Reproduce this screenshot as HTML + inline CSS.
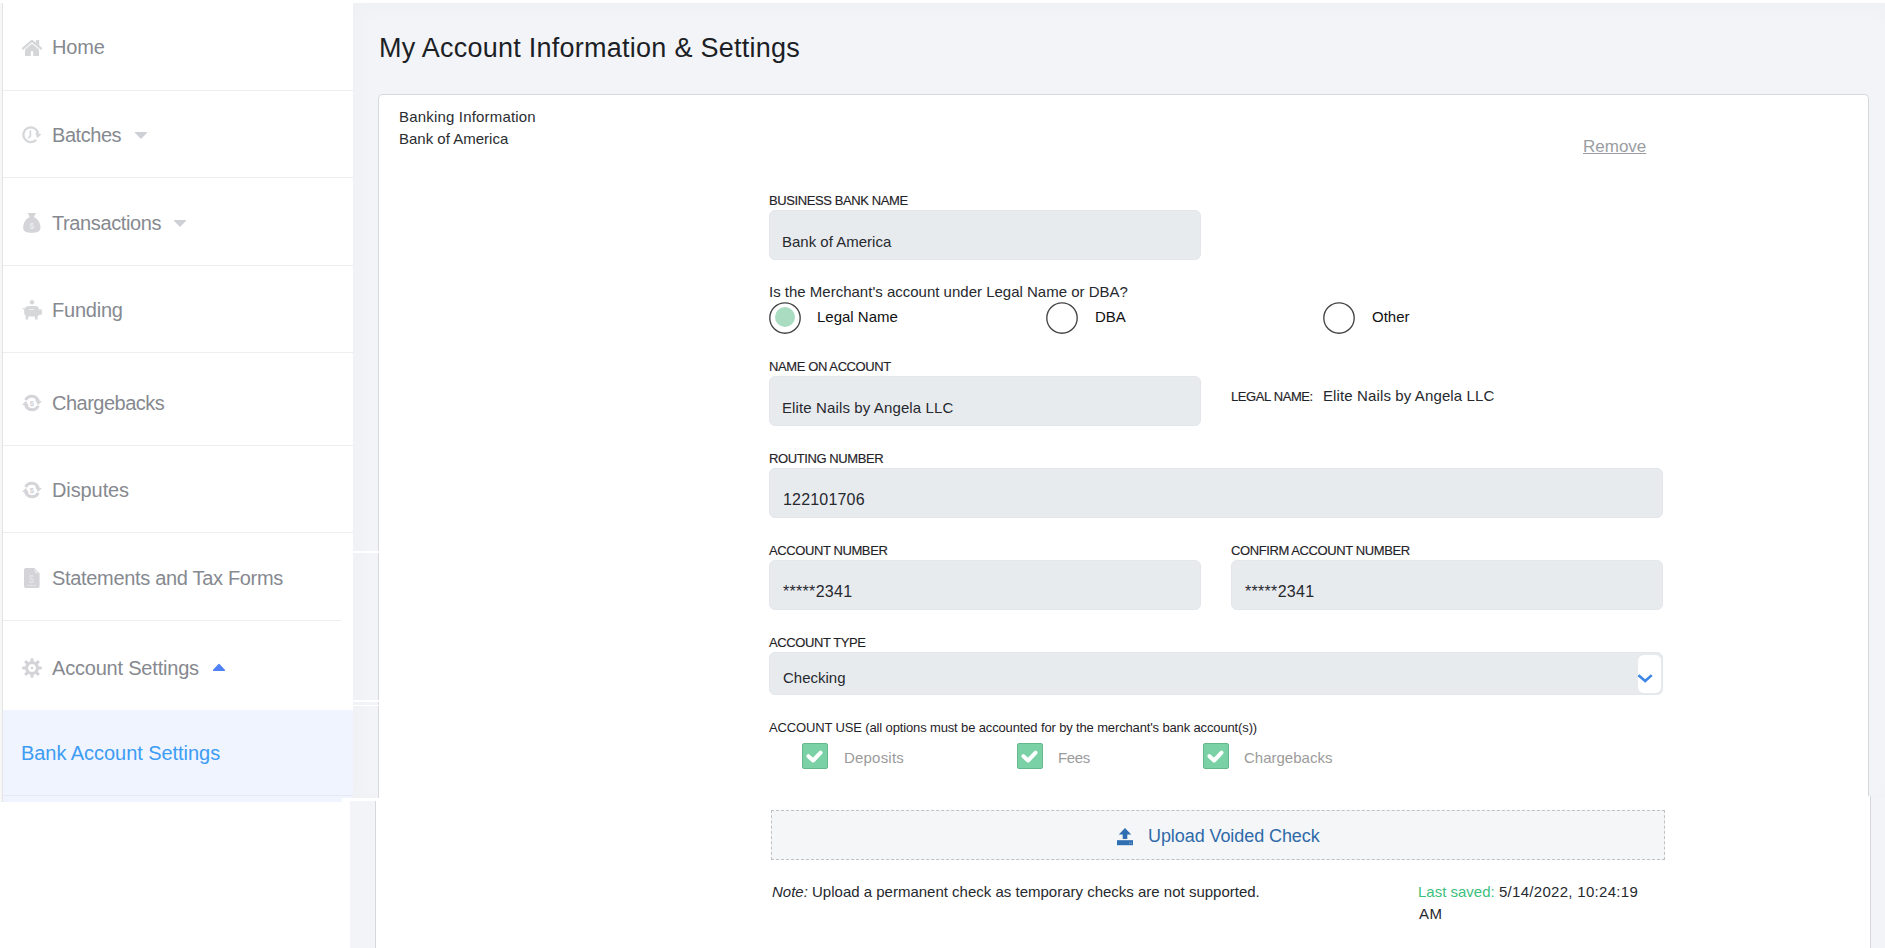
<!DOCTYPE html>
<html><head><meta charset="utf-8">
<style>
*{box-sizing:border-box;margin:0;padding:0}
html,body{width:1885px;height:948px;overflow:hidden;background:#fff;font-family:"Liberation Sans",sans-serif;position:relative}
.abs{position:absolute}
/* sidebar */
#lstrip{left:0;top:3px;width:2px;height:799px;background:#f7f7f7}
#lline{left:2px;top:3px;width:1px;height:799px;background:#e4e4e4}
.sep{position:absolute;left:3px;width:350px;height:1px;background:#edeef0}
.nav{position:absolute;left:52px;font-size:20px;color:#86898f;white-space:nowrap;line-height:1}
.ico{position:absolute;left:22px}
.caret{position:absolute;width:0;height:0;border-left:6px solid transparent;border-right:6px solid transparent;border-top:6px solid #c9cacd}
/* main */
#main{left:353px;top:3px;width:1532px;height:795px;background:#f3f4f8;box-shadow:inset 5px 5px 18px rgba(60,70,90,0.025)}
#main2{left:350px;top:801px;width:1535px;height:147px;background:#f3f4f8}
#card{left:378px;top:94px;width:1491px;height:704px;background:#fff;border:1px solid #d6d8db;border-bottom:none;border-radius:5px 5px 0 0}
#card2{left:375px;top:801px;width:1496px;height:160px;background:#fff;border-right:1px solid #d6d8db}
#card2r{left:1870px;top:796px;width:1px;height:5px;background:#d6d8db}
#gapr{left:1871px;top:798px;width:14px;height:3px;background:#f3f4f8}
#gapw{left:1868px;top:796px;width:2px;height:2px;background:#fff}
#card2l{left:375px;top:801px;width:1px;height:160px;background:#d6d8db}
#gap{left:350px;top:798px;width:29px;height:3px;background:#fff}
.t{position:absolute;white-space:nowrap;line-height:1}
.lbl{position:absolute;margin-top:1px;-webkit-text-stroke:0.15px #1f2328;white-space:nowrap;line-height:1;font-size:13px;letter-spacing:-0.4px;color:#1f2328;text-transform:uppercase}
.inp{position:absolute;height:50px;background:#e8ebee;border-radius:6px;border:1px solid #e3e6ea}
.val{position:absolute;white-space:nowrap;line-height:1;font-size:15px;color:#26292e}
.radio{position:absolute;width:32px;height:32px}
.chk{position:absolute;width:26px;height:26px;background:#7ad1a5;border-radius:2px;border:1px solid #67b98d}
</style></head><body>
<div id="lstrip" class="abs"></div>
<div id="lline" class="abs"></div>

<div class="nav" style="top:37px;letter-spacing:-0.2px">Home</div>
<div class="sep" style="top:90px"></div>
<div class="nav" style="top:125px;letter-spacing:-0.45px">Batches</div>
<div class="sep" style="top:177px"></div>
<div class="nav" style="top:213px;letter-spacing:-0.38px">Transactions</div>
<div class="sep" style="top:265px"></div>
<div class="nav" style="top:300px;letter-spacing:-0.23px">Funding</div>
<div class="sep" style="top:352px"></div>
<div class="nav" style="top:393px;letter-spacing:-0.5px">Chargebacks</div>
<div class="sep" style="top:445px"></div>
<div class="nav" style="top:480px;letter-spacing:-0.1px">Disputes</div>
<div class="sep" style="top:532px"></div>
<div class="nav" style="top:568px;letter-spacing:-0.32px">Statements and Tax Forms</div>
<div class="sep" style="top:620px;width:338px"></div>
<div class="nav" style="top:658px;letter-spacing:-0.2px">Account Settings</div>
<div class="abs" style="left:3px;top:710px;width:350px;height:88px;background:#eff4fe"></div><div class="abs" style="left:3px;top:798px;width:339px;height:4px;background:#eff4fe"></div><div class="abs" style="left:3px;top:795px;width:350px;height:1px;background:#e6eaf0"></div>
<div class="nav" style="top:743px;left:21px;letter-spacing:-0.05px;color:#3d9cf4">Bank Account Settings</div>


<svg class="abs" style="left:22px;top:39px" width="20" height="18" viewBox="0 0 20 18"><g fill="#d5d6d8"><polyline points="0.8,9.6 10,1.8 19.2,9.6" fill="none" stroke="#d5d6d8" stroke-width="2.3" stroke-linecap="round" stroke-linejoin="round"/><rect x="14" y="1" width="3.2" height="5.5"/><path d="M3 10.6 L10 4.8 L17 10.6 L17 17 L11.2 17 L11.2 12.2 L8.8 12.2 L8.8 17 L3 17 Z"/></g></svg>
<svg class="abs" style="left:22px;top:126px" width="20" height="18" viewBox="0 0 20 18"><g fill="none" stroke="#d6d7d9" stroke-width="2.3" stroke-linecap="round"><path d="M13.6 14.4 A7.4 7.4 0 1 1 15.9 6.6"/><polyline points="8.4,5.2 8.3,10.2 6.6,11.6" stroke-width="1.7"/></g><polygon points="13.2,6.6 19.4,8.2 15.2,12.2" fill="#d6d7d9"/></svg>
<svg class="abs" style="left:23px;top:213px" width="18" height="20" viewBox="0 0 18 20"><path fill="#d4d4d9" d="M4.6 0 L13 0 L11 4 C15.3 6.2 17.5 10.5 17.5 14.5 C17.5 18.6 14 19.8 8.8 19.8 C3.6 19.8 0.2 18.6 0.2 14.5 C0.2 10.5 2.3 6.2 6.6 4 Z"/><text x="8.9" y="15.6" font-family="Liberation Sans" font-weight="bold" font-size="8.5" text-anchor="middle" fill="#ececef">$</text></svg>
<svg class="abs" style="left:22px;top:300px" width="20" height="20" viewBox="0 0 20 20"><g fill="#d6d7d9"><circle cx="10" cy="2.3" r="2.2"/><path d="M2.6 8.4 C3.6 6.6 5.5 6 8 6 L14 6 C15.6 6 16.6 7.2 17.2 9.6 L19.9 9.6 L19.9 14.8 L17.3 14.8 L15.6 16.2 L15.6 19.6 L13 19.6 L13 16.6 L6.2 16.6 L6.2 19.6 L3.6 19.6 L3.6 15.8 C2 14.2 1.6 11 2.6 8.4 Z"/><path d="M0.3 8 C0.8 9.6 2 9.8 3 9.6 L2.8 8.6 Z"/></g><rect x="7" y="9" width="5" height="1" fill="#eceef0"/></svg>
<svg class="abs" style="left:22px;top:394px" width="20" height="18" viewBox="0 0 20 18"><g fill="none" stroke="#d4d4d9" stroke-width="3.1"><path d="M3.6 6 A6.8 6.8 0 0 1 16.2 7"/><path d="M16.2 11.8 A6.8 6.8 0 0 1 3.6 11"/></g><g fill="#d4d4d9"><polygon points="13.2,5.8 19.8,7.2 16,11"/><polygon points="6.8,12.2 0.2,10.8 4,7"/></g><text x="9.9" y="11.8" font-family="Liberation Sans" font-weight="bold" font-size="7.5" text-anchor="middle" fill="#cfcfd5">$</text></svg>
<svg class="abs" style="left:22px;top:481px" width="20" height="18" viewBox="0 0 20 18"><g fill="none" stroke="#d4d4d9" stroke-width="3.1"><path d="M3.6 6 A6.8 6.8 0 0 1 16.2 7"/><path d="M16.2 11.8 A6.8 6.8 0 0 1 3.6 11"/></g><g fill="#d4d4d9"><polygon points="13.2,5.8 19.8,7.2 16,11"/><polygon points="6.8,12.2 0.2,10.8 4,7"/></g><text x="9.9" y="11.8" font-family="Liberation Sans" font-weight="bold" font-size="7.5" text-anchor="middle" fill="#cfcfd5">$</text></svg>
<svg class="abs" style="left:24px;top:568px" width="16" height="20" viewBox="0 0 16 20"><path fill="#d3d3d8" d="M2 0 L10.4 0 L15.6 5.4 L15.6 18 Q15.6 20 13.6 20 L2 20 Q0 20 0 18 L0 2 Q0 0 2 0 Z"/><path fill="#e6e6ea" d="M10.4 0.6 L15 5.2 L12 5.2 Q10.4 5.2 10.4 3.6 Z"/><text x="7.3" y="14.6" font-family="Liberation Sans" font-weight="bold" font-size="10" text-anchor="middle" fill="#e2e2e6">$</text><rect x="3" y="16.8" width="9.2" height="1.3" fill="#e2e2e6"/></svg>
<svg class="abs" style="left:22px;top:658px" width="20" height="20" viewBox="0 0 20 20"><path fill="#d3d3d8" fill-rule="evenodd" d="M8.50 3.16 L8.53 0.21 L11.47 0.21 L11.50 3.16 L13.77 4.10 L15.88 2.04 L17.96 4.12 L15.90 6.23 L16.84 8.50 L19.79 8.53 L19.79 11.47 L16.84 11.50 L15.90 13.77 L17.96 15.88 L15.88 17.96 L13.77 15.90 L11.50 16.84 L11.47 19.79 L8.53 19.79 L8.50 16.84 L6.23 15.90 L4.12 17.96 L2.04 15.88 L4.10 13.77 L3.16 11.50 L0.21 11.47 L0.21 8.53 L3.16 8.50 L4.10 6.23 L2.04 4.12 L4.12 2.04 L6.23 4.10Z M10 6 A4 4 0 1 0 10.01 6 Z"/><circle cx="10" cy="10" r="1.3" fill="#d3d3d8"/></svg>
<svg class="abs" style="left:134px;top:131px" width="14" height="9" viewBox="0 0 14 9"><polygon points="1.6,1.6 12.4,1.6 7,7" fill="#cfcfd6" stroke="#cfcfd6" stroke-width="1.4" stroke-linejoin="round"/></svg>
<svg class="abs" style="left:173px;top:219px" width="14" height="9" viewBox="0 0 14 9"><polygon points="1.6,1.6 12.4,1.6 7,7" fill="#cfcfd6" stroke="#cfcfd6" stroke-width="1.4" stroke-linejoin="round"/></svg>
<svg class="abs" style="left:212px;top:663px" width="14" height="9" viewBox="0 0 14 9"><polygon points="1.6,7.2 12.4,7.2 7,1.6" fill="#4f81f7" stroke="#4f81f7" stroke-width="1.4" stroke-linejoin="round"/></svg>
<div id="main" class="abs"></div>
<div id="main2" class="abs"></div>
<div id="card" class="abs"></div>
<div id="card2" class="abs"></div><div id="card2l" class="abs"></div><div id="card2r" class="abs"></div><div id="gapr" class="abs"></div><div id="gapw" class="abs"></div><div id="gap" class="abs"></div>


<div class="abs" style="left:353px;top:551px;width:26px;height:2px;background:#fff"></div>
<div class="abs" style="left:353px;top:700px;width:26px;height:2px;background:#fff"></div>
<div class="abs" style="left:353px;top:705px;width:26px;height:1px;background:#fff"></div>
<div class="t" style="left:379px;top:35px;font-size:27px;letter-spacing:0.25px;color:#1c1f25">My Account Information &amp; Settings</div>

<div class="t" style="left:399px;top:109px;font-size:15px;letter-spacing:0.18px;color:#2a2d31">Banking Information</div>
<div class="t" style="left:399px;top:131px;font-size:15px;color:#2a2d31">Bank of America</div>
<div class="t" style="left:1583px;top:138px;font-size:17px;color:#9a9da2;text-decoration:underline">Remove</div>

<div class="lbl" style="left:769px;top:193px">Business Bank Name</div>
<div class="inp" style="left:769px;top:210px;width:432px"></div>
<div class="val" style="left:782px;top:234px">Bank of America</div>

<div class="t" style="left:769px;top:284px;font-size:15px;color:#26292e">Is the Merchant's account under Legal Name or DBA?</div>
<div class="radio" style="left:769px;top:302px"><svg width="32" height="32" viewBox="0 0 32 32"><circle cx="16" cy="16" r="15.2" fill="none" stroke="#444" stroke-width="1.35"/></svg></div>
<div class="t" style="left:817px;top:309px;font-size:15px;color:#111">Legal Name</div>
<div class="radio" style="left:1046px;top:302px"><svg width="32" height="32" viewBox="0 0 32 32"><circle cx="16" cy="16" r="15.2" fill="none" stroke="#444" stroke-width="1.35"/></svg></div>
<div class="t" style="left:1095px;top:309px;font-size:15px;color:#111">DBA</div>
<div class="radio" style="left:1323px;top:302px"><svg width="32" height="32" viewBox="0 0 32 32"><circle cx="16" cy="16" r="15.2" fill="none" stroke="#444" stroke-width="1.35"/></svg></div>
<div class="t" style="left:1372px;top:309px;font-size:15px;color:#111">Other</div>

<div class="lbl" style="left:769px;top:359px">Name on Account</div>
<div class="inp" style="left:769px;top:376px;width:432px"></div>
<div class="val" style="left:782px;top:400px;letter-spacing:0.12px">Elite Nails by Angela LLC</div>
<div class="lbl" style="left:1231px;top:389px">Legal Name:</div>
<div class="val" style="left:1323px;top:388px;letter-spacing:0.12px">Elite Nails by Angela LLC</div>

<div class="lbl" style="left:769px;top:451px">Routing Number</div>
<div class="inp" style="left:769px;top:468px;width:894px"></div>
<div class="val" style="left:783px;top:492px;font-size:16px;letter-spacing:0.18px">122101706</div>

<div class="lbl" style="left:769px;top:543px">Account Number</div>
<div class="inp" style="left:769px;top:560px;width:432px"></div>
<div class="val" style="left:783px;top:584px;font-size:16px;letter-spacing:0.3px">*****2341</div>
<div class="lbl" style="left:1231px;top:543px">Confirm Account Number</div>
<div class="inp" style="left:1231px;top:560px;width:432px"></div>
<div class="val" style="left:1245px;top:584px;font-size:16px;letter-spacing:0.3px">*****2341</div>

<div class="lbl" style="left:769px;top:635px">Account Type</div>
<div class="inp" style="left:769px;top:652px;width:894px;height:43px"></div>
<div class="val" style="left:783px;top:670px">Checking</div>

<div class="t" style="left:769px;top:721px;font-size:13px;letter-spacing:-0.14px;color:#1f2328">ACCOUNT USE (all options must be accounted for by the merchant's bank account(s))</div>
<div class="chk" style="left:802px;top:743px"></div>
<div class="t" style="left:844px;top:750px;font-size:15px;letter-spacing:0.2px;color:#9b9b9b">Deposits</div>
<div class="chk" style="left:1017px;top:743px"></div>
<div class="t" style="left:1058px;top:750px;font-size:15px;letter-spacing:-0.35px;color:#9b9b9b">Fees</div>
<div class="chk" style="left:1203px;top:743px"></div>
<div class="t" style="left:1244px;top:750px;font-size:15px;color:#9b9b9b">Chargebacks</div>

<div class="abs" style="left:771px;top:810px;width:894px;height:50px;background:#f5f6f8;border:1px dashed #bfc1c4"></div>
<div class="t" style="left:1148px;top:827px;font-size:18px;letter-spacing:-0.08px;color:#2f6aa8">Upload Voided Check</div>

<div class="t" style="left:772px;top:884px;font-size:15px;color:#26292e"><i>Note:</i> Upload a permanent check as temporary checks are not supported.</div>
<div class="t" style="left:1418px;top:884px;font-size:15px;color:#26292e"><span style="color:#3cc07e">Last saved:</span> <span style="letter-spacing:0.3px">5/14/2022, 10:24:19</span></div>
<div class="t" style="left:1419px;top:906px;letter-spacing:0.6px;font-size:15px;color:#26292e">AM</div>

<div class="abs" style="left:775px;top:307px;width:20px;height:20px;border-radius:50%;background:#a9dcc1"></div>
<svg class="abs" style="left:802px;top:743px" width="26" height="26" viewBox="0 0 26 26"><polyline points="6.4,13.2 11.1,17.5 18.6,9.6" fill="none" stroke="#fff" stroke-width="4" stroke-linecap="round" stroke-linejoin="round"/></svg>
<svg class="abs" style="left:1017px;top:743px" width="26" height="26" viewBox="0 0 26 26"><polyline points="6.4,13.2 11.1,17.5 18.6,9.6" fill="none" stroke="#fff" stroke-width="4" stroke-linecap="round" stroke-linejoin="round"/></svg>
<svg class="abs" style="left:1203px;top:743px" width="26" height="26" viewBox="0 0 26 26"><polyline points="6.4,13.2 11.1,17.5 18.6,9.6" fill="none" stroke="#fff" stroke-width="4" stroke-linecap="round" stroke-linejoin="round"/></svg>
<div class="abs" style="left:1638px;top:655px;width:23px;height:38px;border-radius:6px;background:#fff"></div>
<svg class="abs" style="left:1636px;top:671px" width="18" height="14" viewBox="0 0 18 14"><polyline points="3.4,5 9.2,10 14.8,5" fill="none" stroke="#3e86e5" stroke-width="2.6" stroke-linecap="square"/></svg>
<svg class="abs" style="left:1116px;top:827px" width="18" height="19" viewBox="0 0 18 19"><g fill="#2f6eb0"><polygon points="9,1 15.2,7.6 11.3,7.6 11.3,12 6.7,12 6.7,7.6 2.8,7.6"/><rect x="1" y="13.2" width="16" height="5"/></g><rect x="13" y="15.6" width="1.2" height="1" fill="#8fb2d8"/><rect x="14.8" y="15.6" width="1.2" height="1" fill="#8fb2d8"/></svg>
</body></html>
